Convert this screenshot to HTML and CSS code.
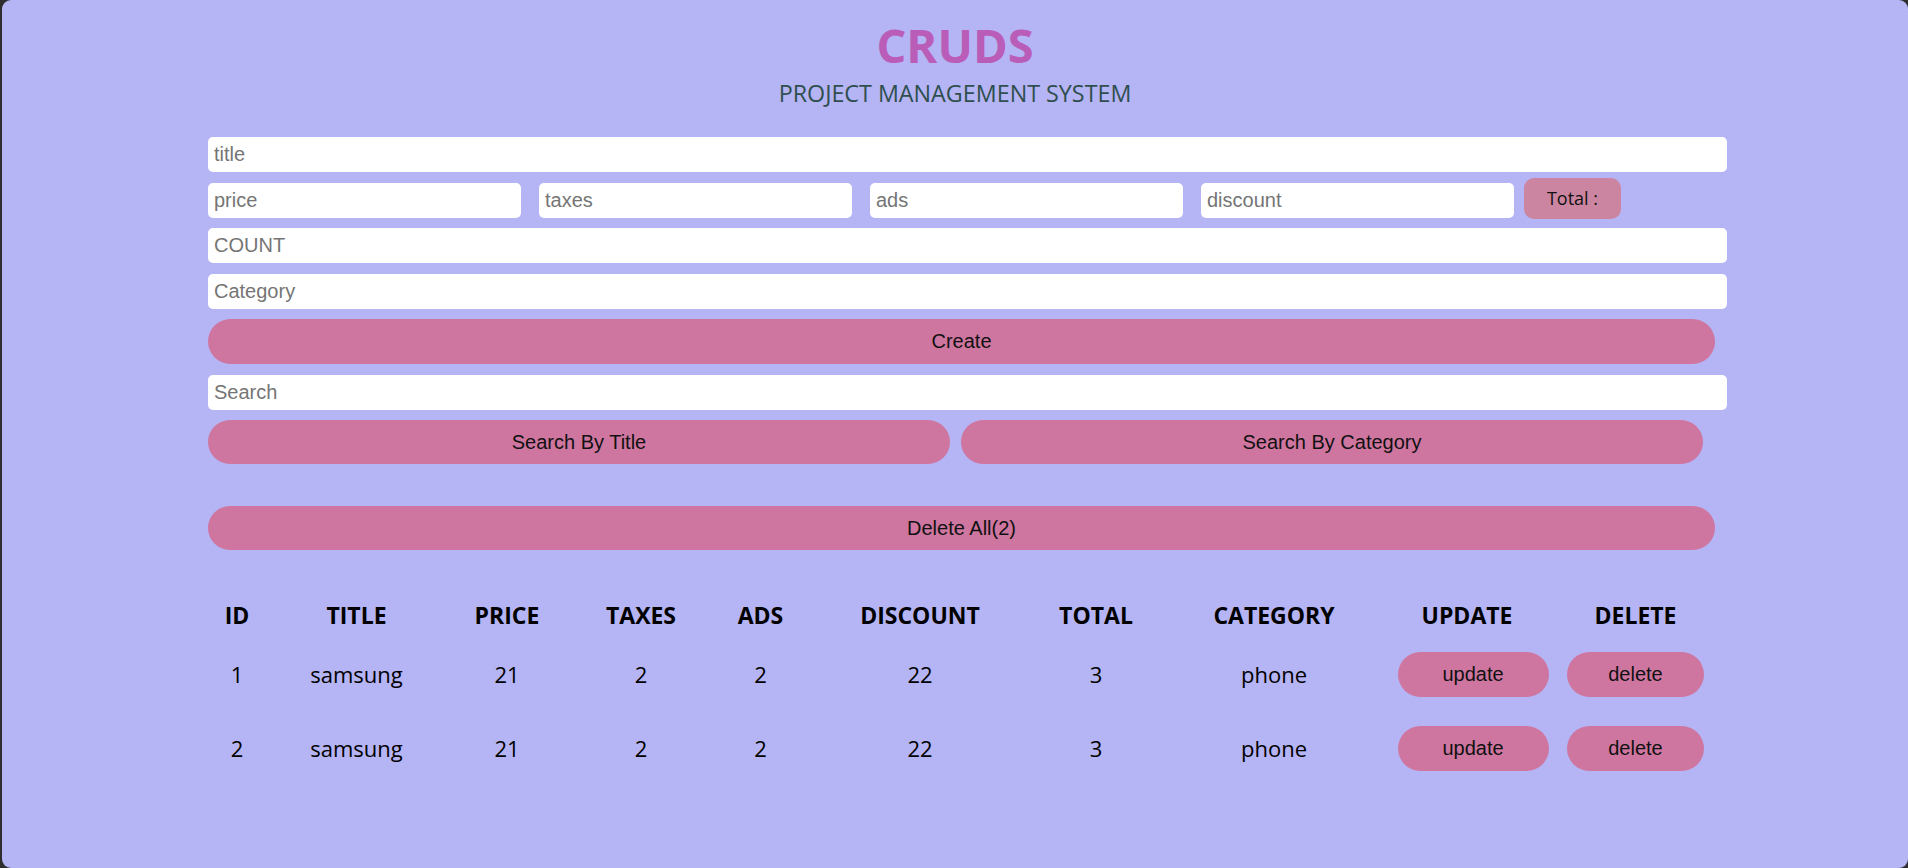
FILE: index.html
```html
<!DOCTYPE html>
<html lang="en">
<head>
<meta charset="utf-8">
<title>CRUDS</title>
<link rel="stylesheet" href="styles.css">
</head>
<body>
<div class="window">
  <header class="head">
    <h1 class="logo">CRUDS</h1>
    <p class="sub">PROJECT MANAGEMENT SYSTEM</p>
  </header>
  <main class="crud">
    <div class="inputs">
      <input class="field" type="text" placeholder="title">
      <div class="price-row">
        <input class="field" type="number" placeholder="price">
        <input class="field" type="number" placeholder="taxes">
        <input class="field" type="number" placeholder="ads">
        <input class="field" type="number" placeholder="discount">
        <small class="total">Total :</small>
      </div>
      <input class="field" type="number" placeholder="COUNT">
      <input class="field" type="text" placeholder="Category">
      <button class="btn btn-create">Create</button>
    </div>
    <div class="search-block">
      <input class="field" type="text" placeholder="Search">
      <div class="search-btns">
        <button class="btn btn-search">Search By Title</button>
        <button class="btn btn-search">Search By Category</button>
      </div>
    </div>
    <div class="delete-all-wrap">
      <button class="btn btn-delete-all">Delete All(2)</button>
    </div>
    <table class="output">
      <colgroup>
        <col class="c-id"><col class="c-title"><col class="c-price"><col class="c-taxes"><col class="c-ads">
        <col class="c-discount"><col class="c-total"><col class="c-category"><col class="c-update"><col class="c-delete">
      </colgroup>
      <thead>
        <tr>
          <th>ID</th><th>TITLE</th><th>PRICE</th><th>TAXES</th><th>ADS</th>
          <th>DISCOUNT</th><th>TOTAL</th><th>CATEGORY</th><th class="th-update">UPDATE</th><th>DELETE</th>
        </tr>
      </thead>
      <tbody>
        <tr>
          <td>1</td><td>samsung</td><td>21</td><td>2</td><td>2</td><td>22</td><td>3</td><td>phone</td>
          <td><button class="btn btn-row btn-update">update</button></td>
          <td><button class="btn btn-row btn-del">delete</button></td>
        </tr>
        <tr>
          <td>2</td><td>samsung</td><td>21</td><td>2</td><td>2</td><td>22</td><td>3</td><td>phone</td>
          <td><button class="btn btn-row btn-update">update</button></td>
          <td><button class="btn btn-row btn-del">delete</button></td>
        </tr>
      </tbody>
    </table>
  </main>
</div>
</body>
</html>
```

FILE: styles.css
```css
html {
  background: #2e2e2e;
}

body {
  margin: 0;
  overflow: hidden;
}

.window {
  margin-left: 2px;
  height: 868px;
  background: #b5b4f4;
  border-radius: 9px;
  padding-top: 20px;
  box-sizing: border-box;
}

.head {
  text-align: center;
  font-family: "Open Sans", "Noto Sans", sans-serif;
}

.logo {
  margin: 0;
  font-size: 47px;
  line-height: 50px;
  font-weight: 700;
  color: #b95db9;
}

.sub {
  margin: 8px 0 0;
  font-size: 23.3px;
  line-height: 30px;
  color: #2f4f4f;
}

.crud {
  margin: 29px 0 0 206px;
  width: 1519px;
}

.inputs {
  display: flex;
  flex-direction: column;
  gap: 10.5px;
}

.field {
  display: block;
  width: 100%;
  height: 35px;
  box-sizing: border-box;
  border: none;
  outline: none;
  border-radius: 5px;
  padding: 0 6px;
  background: #fff;
  font-family: "Liberation Sans", Arial, sans-serif;
  font-size: 20px;
  color: #222;
}

.field::placeholder {
  color: #757575;
}

.price-row {
  display: grid;
  grid-template-columns: 313px 313px 313px 313px 97px;
  column-gap: 18px;
  align-items: start;
}

.total {
  grid-column: 5;
  width: 97px;
  margin: -5px 0 -1px -8px;
  height: 41px;
  border-radius: 10px;
  background: #cc85a0;
  color: #111;
  font-family: "Open Sans", "Noto Sans", sans-serif;
  font-size: 18px;
  display: flex;
  align-items: center;
  justify-content: center;
}

.btn {
  border: none;
  background: #cf76a0;
  color: #111;
  font-family: "Liberation Sans", Arial, sans-serif;
  font-size: 20px;
  cursor: pointer;
  padding: 0;
}

.btn-create {
  width: 1507px;
  height: 45px;
  border-radius: 23px;
}

.search-block {
  margin-top: 11px;
}

.search-btns {
  margin-top: 10px;
  display: grid;
  grid-template-columns: 742px 742px;
  column-gap: 11px;
}

.btn-search {
  height: 44px;
  border-radius: 22px;
}

.delete-all-wrap {
  margin-top: 42px;
}

.btn-delete-all {
  width: 1507px;
  height: 44px;
  border-radius: 22px;
}

.output {
  margin-top: 43px;
  width: 1507px;
  border-collapse: collapse;
  table-layout: fixed;
  font-family: "Open Sans", "Noto Sans", sans-serif;
  color: #000;
}

.c-id { width: 58px; }
.c-title { width: 181px; }
.c-price { width: 120px; }
.c-taxes { width: 148px; }
.c-ads { width: 91px; }
.c-discount { width: 228px; }
.c-total { width: 124px; }
.c-category { width: 232px; }
.c-update { width: 166px; }
.c-delete { width: 159px; }

.output th {
  height: 44px;
  padding: 0;
  font-size: 23px;
  font-weight: 700;
  text-align: center;
}

.output th.th-update {
  padding-right: 12px;
}

.output td {
  height: 74px;
  padding: 0;
  font-size: 22px;
  text-align: center;
  vertical-align: middle;
}

.btn-row {
  height: 45px;
  border-radius: 23px;
  vertical-align: middle;
}

.btn-update {
  width: 151px;
}

.btn-del {
  width: 137px;
}
```
